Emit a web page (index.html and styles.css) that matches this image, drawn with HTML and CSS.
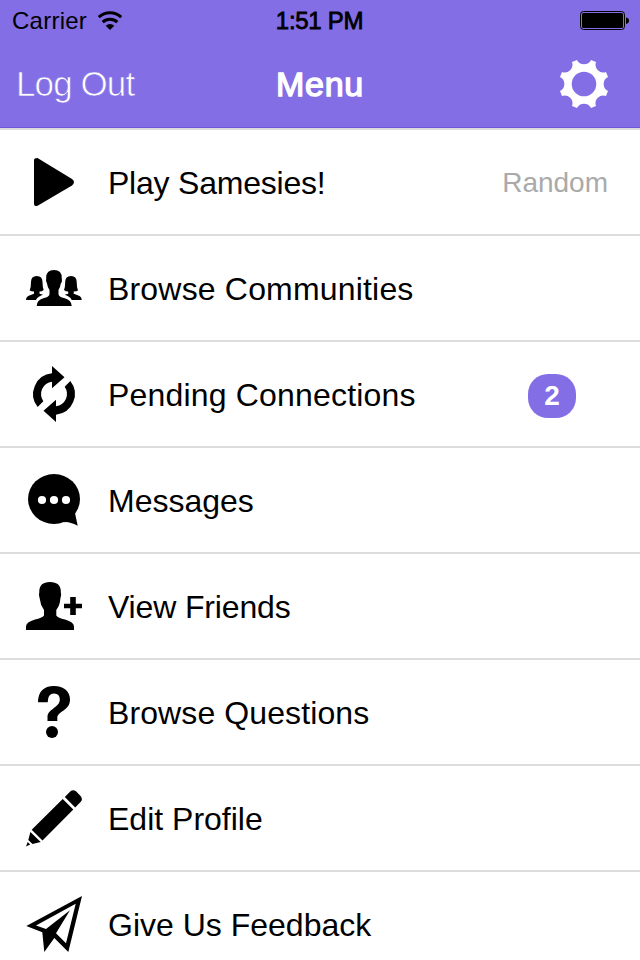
FILE: index.html
```html
<!DOCTYPE html>
<html lang="en">
<head>
<meta charset="utf-8">
<title>Menu</title>
<link rel="stylesheet" href="styles.css">
</head>
<body>
<header class="header">
  <div class="status">
    <div class="carrier"><span>Carrier</span>
      <svg class="wifi" width="26" height="20" viewBox="0 0 26 20"><g fill="none" stroke="#000" stroke-width="3"><path d="M1.8 6.2A16.2 16.2 0 0 1 24.2 6.2"/><path d="M5.7 11.1A10.6 10.6 0 0 1 20.3 11.1"/></g><path d="M13 19L8.7 14.7A6 6 0 0 1 17.3 14.7Z"/></svg>
    </div>
    <div class="time">1:51 PM</div>
    <svg class="battery" width="50" height="20" viewBox="0 0 50 20"><rect x=".5" y=".5" width="44" height="18" rx="3" fill="none" stroke="#000"/><rect x="2" y="2" width="41" height="15" rx="1.5"/><path d="M46 6.5Q49 7 49 9.7Q49 12.3 46 13Z"/></svg>
  </div>
  <nav class="nav">
    <a class="logout">Log Out</a>
    <h1 class="title">Menu</h1>
    <svg class="gear" width="50" height="50" viewBox="-25 -25 50 50"><path fill="#fff" fill-rule="evenodd" d="M-7 -24A7.8 7.8 0 0 0 7 -24L12 -22A7.8 7.8 0 0 0 22 -12L24 -7A7.8 7.8 0 0 0 24 7L22 12A7.8 7.8 0 0 0 12 22L7 24A7.8 7.8 0 0 0 -7 24L-12 22A7.8 7.8 0 0 0 -22 12L-24 7A7.8 7.8 0 0 0 -24 -7L-22 -12A7.8 7.8 0 0 0 -12 -22ZM12.3 0A12.3 12.3 0 1 0 -12.3 0A12.3 12.3 0 1 0 12.3 0Z"/></svg>
  </nav>
</header>
<main class="menu">
  <div class="row">
    <svg class="icon" viewBox="0 0 108 104"><path d="M34 30Q34 28 37.5 28L72 49Q76 52 72 55.5L38 75.5Q34 77 34 74Z"/></svg>
    <span class="label play">Play Samesies!</span><span class="detail">Random</span>
  </div>
  <div class="row">
    <svg class="icon" viewBox="0 0 108 104"><path id="side" d="M29.7 54.5Q31 51 31 46Q31 40 36.7 40Q42.5 40 42.5 46Q42.5 51 43.7 54Q42 55.5 39.5 55.5V57.8L43 58.8Q37.5 60.5 36 64H26Q26 60.5 30 59.3L34 57.8V55.5Q31 55.5 29.7 54.5Z"/><use href="#side" transform="translate(107.7 0) scale(-1 1)"/><path d="M46.2 42Q46 34 54 34Q62 34 61.7 42Q62.5 46 60.8 47.5Q60.3 51.5 58.5 54V58.5Q59.5 61 64 62Q71.7 64 71.7 70H36.7Q36.7 64 44 62Q48.5 61 49.5 58.5V54Q47.5 51.5 47 47.5Q45.5 46 46.2 42Z"/></svg>
    <span class="label communities">Browse Communities</span>
  </div>
  <div class="row">
    <svg class="icon" viewBox="0 0 108 104"><path id="arrow" d="M52 24L64.5 35.3L52 46.3V39.7A12.5 12.5 0 0 0 43.3 59.3L37.7 65A20.8 20.8 0 0 1 52 31.3Z"/><use href="#arrow" transform="rotate(180 54 52)"/></svg>
    <span class="label pending">Pending Connections</span><span class="badge">2</span>
  </div>
  <div class="row">
    <svg class="icon" viewBox="0 0 108 104"><ellipse cx="54" cy="51" rx="26" ry="25"/><path d="M64 74.3Q68 73 77.7 77.7L75 65L66 65Z"/><g fill="#fff"><circle cx="42" cy="52" r="4.1"/><circle cx="54" cy="52" r="4.1"/><circle cx="66" cy="52" r="4.1"/></g></svg>
    <span class="label messages">Messages</span>
  </div>
  <div class="row">
    <svg class="icon" viewBox="0 0 108 104"><path d="M39.3 38Q39 28 50 28Q61 28 60.8 38Q61.8 41 60.3 45Q60 51 56.3 56V61.5Q58 64 65 65.5Q74 68 74 72.5V76H26V72.5Q26 68 35 65.5Q42 64 44 61.5V56Q40.3 51 39.8 45Q38.3 41 39.3 38Z"/><path d="M70.2 43H75.8V49.7H82V54.3H75.8V61H70.2V54.3H64V49.7H70.2Z"/></svg>
    <span class="label friends">View Friends</span>
  </div>
  <div class="row">
    <svg class="icon" viewBox="0 0 108 104"><path d="M38 42.3C38 32 43.5 26 54 26C64 26 70 31.5 70 39.5C70 51 57.3 51 57.3 58V61H47.5V57C47.5 49 59.8 47.5 59.8 39.5Q59.8 33.5 54 33.5Q47.7 33.5 47.7 42.3Z"/><circle cx="52" cy="72" r="6"/></svg>
    <span class="label questions">Browse Questions</span>
  </div>
  <div class="row">
    <svg class="icon" viewBox="0 0 108 104"><path d="M62.7 33L73.3 43.5L42.5 74.5L31.7 63.7ZM64.8 31L70.5 25.3Q72.8 23 76 25.3L80.8 30.3Q83 33.5 80.8 35.8L75.2 41.4ZM30.4 66L40.7 76L32.5 78L28.3 74ZM27.7 76.1L30.2 78.6L26 80.4Z"/></svg>
    <span class="label edit">Edit Profile</span>
  </div>
  <div class="row">
    <svg class="icon" viewBox="0 0 108 104"><path fill-rule="evenodd" d="M26.3 54L82 24L68.3 80L54.3 66L44.3 80L42.3 60.3ZM36 53.6L46 57L70 38.3L56 61.3L66 71.3L75.7 31.7Z"/></svg>
    <span class="label feedback">Give Us Feedback</span>
  </div>
</main>
</body>
</html>
```
FILE: styles.css
```css
* { box-sizing: border-box; }
body {
  margin: 0;
  height: 960px;
  overflow: hidden;
  background: #fff;
  color: #000;
  font-family: "Liberation Sans", Arial, sans-serif;
}
svg { display: block; }
.header {
  height: 128px;
  background: #836ee6;
  border-bottom: 1px solid #6f58d8;
}
.status {
  display: grid;
  grid-template-columns: 1fr auto 1fr;
  height: 40px;
  align-items: center;
  padding: 2px 10px 0 12px;
  font-size: 24px;
  line-height: 36px;
}
.carrier { display: flex; gap: 10px; align-items: center; letter-spacing: 0.25px; }
.time { margin-right: 3px; letter-spacing: -0.3px; -webkit-text-stroke: 0.8px #000; }
.battery { justify-self: end; }
.nav {
  display: grid;
  grid-template-columns: 1fr auto 1fr;
  align-items: center;
  height: 88px;
  padding: 0 16px;
  color: #fff;
}
.logout {
  font-size: 35px;
  letter-spacing: -0.9px;
  -webkit-text-stroke: 0.7px #836ee6;
}
.title {
  margin: 0;
  font-size: 34px;
  font-weight: 400;
  letter-spacing: 0.7px;
  -webkit-text-stroke: 1.4px #fff;
}
.gear { justify-self: end; margin-right: 15px; }
.row {
  display: flex;
  align-items: center;
  height: 106px;
  border-top: 2px solid #dcdcdc;
}
.icon { width: 108px; height: 104px; flex: none; }
.label { flex: 1; font-size: 32px; line-height: 40px; padding-top: 2px; }
.play { letter-spacing: -0.22px; }
.communities, .pending { letter-spacing: 0.18px; }
.friends { letter-spacing: -0.15px; }
.questions { letter-spacing: 0.1px; }
.detail { margin-right: 32px; padding-top: 2px; font-size: 28px; color: #aaa; }
.badge {
  width: 48px;
  height: 44px;
  margin: 4px 64px 0 0;
  border-radius: 20px;
  background: #836ee6;
  color: #fff;
  font-size: 28px;
  font-weight: 700;
  line-height: 44px;
  text-align: center;
}
```
